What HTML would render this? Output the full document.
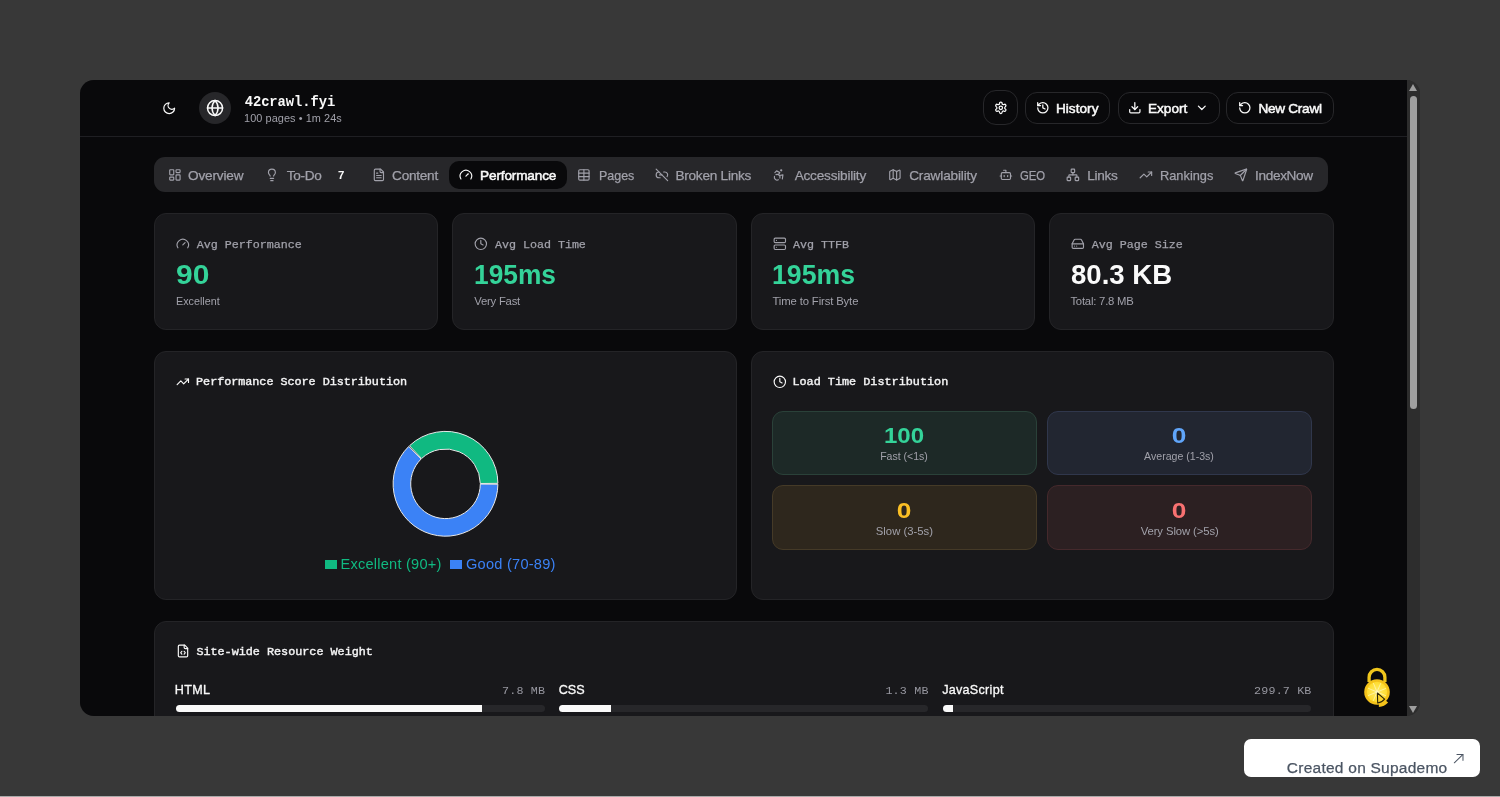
<!DOCTYPE html>
<html lang="en">
<head>
<meta charset="utf-8">
<title>42crawl.fyi – Performance</title>
<style>
*{box-sizing:border-box;margin:0;padding:0}
html,body{width:1500px;height:797px;overflow:hidden}
body{background:#383838;font-family:"Liberation Sans",sans-serif;color:#fafafa;position:relative}
#bottomline{position:absolute;left:0;top:796px;width:1500px;height:1px;background:#aaaaaa}
#wrap{will-change:transform;position:absolute;left:80px;top:80px;width:1340px;height:635.7px;border-radius:14px;overflow:hidden;background:#2d2d2d}
#frame{position:absolute;left:0;top:0;width:1327px;height:636px;background:#09090b;overflow:hidden}
#sb{position:absolute;left:1327px;top:0;width:13px;height:636px;background:#2d2d2d}
#sb .thumb{position:absolute;left:2.6px;top:16px;width:7.8px;height:313px;border-radius:4px;background:#9e9e9e}
#sb .up{position:absolute;left:1.8px;top:4px;width:0;height:0;border-left:4.5px solid transparent;border-right:4.5px solid transparent;border-bottom:7px solid #9e9e9e}
#sb .down{position:absolute;left:1.8px;top:626.1px;width:0;height:0;border-left:4.5px solid transparent;border-right:4.5px solid transparent;border-top:7px solid #9e9e9e}
.t{position:absolute;white-space:nowrap}
.ico{position:absolute;fill:none;stroke:currentColor;stroke-linecap:round;stroke-linejoin:round;overflow:visible}
.b{position:absolute}
#supa{position:absolute;left:1244px;top:739px;width:236px;height:38px;background:#fff;border-radius:7px}
</style>
</head>
<body>
<div id="wrap">
<div id="frame">
<div class="b" style="left:0.00px;top:56.00px;width:1327.00px;height:1.00px;background:#1f1f23"></div>
<div class="b" style="left:119.00px;top:12.40px;width:32.00px;height:32.00px;background:#27272a;border-radius:16px"></div>
<div class="b" style="left:903.20px;top:10.40px;width:34.60px;height:34.80px;border:1px solid #27272a;border-radius:13px;background:#09090b"></div>
<div class="b" style="left:945.20px;top:12.20px;width:84.70px;height:31.40px;border:1px solid #27272a;border-radius:12px;background:#09090b"></div>
<div class="b" style="left:1037.50px;top:12.20px;width:102.10px;height:31.40px;border:1px solid #27272a;border-radius:12px;background:#09090b"></div>
<div class="b" style="left:1146.40px;top:12.20px;width:107.40px;height:31.40px;border:1px solid #27272a;border-radius:12px;background:#09090b"></div>
<div class="b" style="left:74.00px;top:77.00px;width:1174.00px;height:35.00px;background:#27272a;border-radius:11px"></div>
<div class="b" style="left:369.20px;top:81.20px;width:118.00px;height:27.60px;background:#09090b;border-radius:10px"></div>
<div class="b" style="left:74.00px;top:133.00px;width:284.00px;height:117.00px;background:#18181b;border:1px solid #242427;border-radius:12px"></div>
<div class="b" style="left:372.40px;top:133.00px;width:284.20px;height:117.00px;background:#18181b;border:1px solid #242427;border-radius:12px"></div>
<div class="b" style="left:670.60px;top:133.00px;width:284.40px;height:117.00px;background:#18181b;border:1px solid #242427;border-radius:12px"></div>
<div class="b" style="left:969.00px;top:133.00px;width:284.60px;height:117.00px;background:#18181b;border:1px solid #242427;border-radius:12px"></div>
<div class="b" style="left:74.00px;top:270.80px;width:582.60px;height:249.20px;background:#18181b;border:1px solid #242427;border-radius:12px"></div>
<div class="b" style="left:670.60px;top:270.80px;width:583.00px;height:249.20px;background:#18181b;border:1px solid #242427;border-radius:12px"></div>
<svg class="b" style="left:0;top:0" width="1327" height="636"><path d="M417.90 403.34A52.4 52.4 0 0 0 329.50 365.73L341.59 378.52A34.8 34.8 0 0 1 400.30 403.50Z" fill="#10b981" stroke="#e8e8e8" stroke-width="1"/><path d="M328.71 366.49A52.4 52.4 0 1 0 417.90 404.26L400.30 404.10A34.8 34.8 0 1 1 341.07 379.02Z" fill="#3b82f6" stroke="#e8e8e8" stroke-width="1"/></svg>
<div class="b" style="left:245.20px;top:479.80px;width:12.00px;height:9.60px;background:#10b981"></div>
<div class="b" style="left:370.40px;top:479.80px;width:11.80px;height:9.60px;background:#3b82f6"></div>
<div class="b" style="left:691.70px;top:330.90px;width:265.20px;height:64.00px;background:#1d2927;border:1px solid #2a4139;border-radius:11px"></div>
<div class="b" style="left:967.30px;top:330.90px;width:264.90px;height:64.00px;background:#222631;border:1px solid #30374c;border-radius:11px"></div>
<div class="b" style="left:691.70px;top:405.30px;width:265.20px;height:64.60px;background:#2e271d;border:1px solid #453a27;border-radius:11px"></div>
<div class="b" style="left:967.30px;top:405.30px;width:264.90px;height:64.60px;background:#2c2022;border:1px solid #45292c;border-radius:11px"></div>
<div class="b" style="left:74.00px;top:541.00px;width:1179.60px;height:179.00px;background:#18181b;border:1px solid #242427;border-radius:12px"></div>
<div class="b" style="left:95.80px;top:625.00px;width:369.20px;height:7.30px;background:#27272a;border-radius:4px"></div>
<div class="b" style="left:95.80px;top:625.00px;width:305.90px;height:7.30px;background:#fafafa;border-radius:4px 0 0 4px"></div>
<div class="b" style="left:479.30px;top:625.00px;width:368.50px;height:7.30px;background:#27272a;border-radius:4px"></div>
<div class="b" style="left:479.30px;top:625.00px;width:51.40px;height:7.30px;background:#fafafa;border-radius:4px 0 0 4px"></div>
<div class="b" style="left:862.70px;top:625.00px;width:368.30px;height:7.30px;background:#27272a;border-radius:4px"></div>
<div class="b" style="left:862.70px;top:625.00px;width:10.00px;height:7.30px;background:#fafafa;border-radius:4px 0 0 4px"></div>
<svg class="b" style="left:1276.70px;top:582.00px;overflow:visible" width="40" height="50" viewBox="-20 -30 40 50">
<defs><radialGradient id="lg" cx="50%" cy="50%" r="50%"><stop offset="0" stop-color="#fffbe0"/><stop offset="0.22" stop-color="#ffe95e"/><stop offset="1" stop-color="#ffdc2e"/></radialGradient></defs>
<path d="M-7.9 -10V-14.7a7.9 7.9 0 0 1 15.8 0V-10" fill="none" stroke="#f0c61c" stroke-width="3.3"/>
<circle r="12.8" fill="#f4c21a"/>
<circle r="10.2" fill="url(#lg)"/>
<g stroke="#fff6b8" stroke-width="0.9" opacity="0.85"><line x1="0" y1="0" x2="3.75" y2="-8.84"/><line x1="0" y1="0" x2="8.90" y2="-3.60"/><line x1="0" y1="0" x2="8.84" y2="3.75"/><line x1="0" y1="0" x2="3.60" y2="8.90"/><line x1="0" y1="0" x2="-3.75" y2="8.84"/><line x1="0" y1="0" x2="-8.90" y2="3.60"/><line x1="0" y1="0" x2="-8.84" y2="-3.75"/><line x1="0" y1="0" x2="-3.60" y2="-8.90"/></g>
<path d="M0.6 1.2L1 13.6A12.8 12.8 0 0 0 10.2 9.2Z" fill="#f4c21a" transform="translate(0.9 1.3)"/>
<path d="M0.4 1L0.7 11A10.2 10.2 0 0 0 7.6 7.2Z" fill="#fbd42c" stroke="#2b2406" stroke-width="1.1" stroke-linejoin="round"/>
</svg>
<svg class="ico" viewBox="0 0 24 24" width="14.4" height="14.4" style="left:82.10px;top:20.80px;color:#fafafa;stroke-width:2"><path d="M12 3a6 6 0 0 0 9 9 9 9 0 1 1-9-9Z"/></svg>
<svg class="ico" viewBox="0 0 24 24" width="18.1" height="18.1" style="left:125.95px;top:19.05px;color:#fafafa;stroke-width:2"><circle cx="12" cy="12" r="10"/><path d="M12 2a14.5 14.5 0 0 0 0 20 14.5 14.5 0 0 0 0-20"/><path d="M2 12h20"/></svg>
<svg class="ico" viewBox="0 0 24 24" width="13.65" height="13.65" style="left:913.57px;top:21.38px;color:#fafafa;stroke-width:2.2"><path d="M12.22 2h-.44a2 2 0 0 0-2 2v.18a2 2 0 0 1-1 1.73l-.43.25a2 2 0 0 1-2 0l-.15-.08a2 2 0 0 0-2.73.73l-.22.38a2 2 0 0 0 .73 2.73l.15.1a2 2 0 0 1 1 1.72v.51a2 2 0 0 1-1 1.74l-.15.09a2 2 0 0 0-.73 2.73l.22.38a2 2 0 0 0 2.73.73l.15-.08a2 2 0 0 1 2 0l.43.25a2 2 0 0 1 1 1.73V20a2 2 0 0 0 2 2h.44a2 2 0 0 0 2-2v-.18a2 2 0 0 1 1-1.73l.43-.25a2 2 0 0 1 2 0l.15.08a2 2 0 0 0 2.73-.73l.22-.39a2 2 0 0 0-.73-2.73l-.15-.08a2 2 0 0 1-1-1.74v-.5a2 2 0 0 1 1-1.74l.15-.09a2 2 0 0 0 .73-2.73l-.22-.38a2 2 0 0 0-2.73-.73l-.15.08a2 2 0 0 1-2 0l-.43-.25a2 2 0 0 1-1-1.73V4a2 2 0 0 0-2-2z"/><circle cx="12" cy="12" r="3"/></svg>
<svg class="ico" viewBox="0 0 24 24" width="13.65" height="13.65" style="left:956.17px;top:21.08px;color:#fafafa;stroke-width:2.2"><path d="M3 12a9 9 0 1 0 9-9 9.75 9.75 0 0 0-6.74 2.74L3 8"/><path d="M3 3v5h5"/><path d="M12 7v5l4 2"/></svg>
<svg class="ico" viewBox="0 0 24 24" width="13.65" height="13.65" style="left:1048.17px;top:21.08px;color:#fafafa;stroke-width:2.2"><path d="M21 15v4a2 2 0 0 1-2 2H5a2 2 0 0 1-2-2v-4"/><path d="m7 10 5 5 5-5"/><path d="M12 15V3"/></svg>
<svg class="ico" viewBox="0 0 24 24" width="13.65" height="13.65" style="left:1114.97px;top:21.08px;color:#fafafa;stroke-width:2.2"><path d="m6 9 6 6 6-6"/></svg>
<svg class="ico" viewBox="0 0 24 24" width="13.65" height="13.65" style="left:1157.97px;top:21.08px;color:#fafafa;stroke-width:2.2"><path d="M3 12a9 9 0 1 0 9-9 9.75 9.75 0 0 0-6.74 2.74L3 8"/><path d="M3 3v5h5"/></svg>
<svg class="ico" viewBox="0 0 24 24" width="13.8" height="13.8" style="left:88.00px;top:88.10px;color:#a1a1aa;stroke-width:2"><rect width="7" height="9" x="3" y="3" rx="1"/><rect width="7" height="5" x="14" y="3" rx="1"/><rect width="7" height="9" x="14" y="12" rx="1"/><rect width="7" height="5" x="3" y="16" rx="1"/></svg>
<svg class="ico" viewBox="0 0 24 24" width="13.8" height="13.8" style="left:185.20px;top:88.10px;color:#a1a1aa;stroke-width:2"><path d="M15 14c.2-1 .7-1.7 1.5-2.5 1-.9 1.500-2.200 1.500-3.500A6 6 0 0 0 6 8c0 1 .2 2.200 1.500 3.500.7.700 1.300 1.500 1.500 2.500"/><path d="M9 18h6"/><path d="M10 22h4"/></svg>
<svg class="ico" viewBox="0 0 24 24" width="13.8" height="13.8" style="left:291.80px;top:88.10px;color:#a1a1aa;stroke-width:2"><path d="M15 2H6a2 2 0 0 0-2 2v16a2 2 0 0 0 2 2h12a2 2 0 0 0 2-2V7Z"/><path d="M14 2v4a2 2 0 0 0 2 2h4"/><path d="M10 9H8"/><path d="M16 13H8"/><path d="M16 17H8"/></svg>
<svg class="ico" viewBox="0 0 24 24" width="13.8" height="13.8" style="left:379.10px;top:88.10px;color:#fafafa;stroke-width:2"><path d="m12 14 4-4"/><path d="M3.340 19a10 10 0 1 1 17.320 0"/></svg>
<svg class="ico" viewBox="0 0 24 24" width="13.8" height="13.8" style="left:497.10px;top:88.10px;color:#a1a1aa;stroke-width:2"><path d="M12 3v18"/><rect width="18" height="18" x="3" y="3" rx="2"/><path d="M3 9h18"/><path d="M3 15h18"/></svg>
<svg class="ico" viewBox="0 0 24 24" width="13.8" height="13.8" style="left:574.90px;top:88.10px;color:#a1a1aa;stroke-width:2"><path d="M9 17H7A5 5 0 0 1 7 7"/><path d="M15 7h2a5 5 0 0 1 4 8"/><path d="M8 12h4"/><path d="M2 2l20 20"/></svg>
<svg class="ico" viewBox="0 0 24 24" width="13.8" height="13.8" style="left:692.30px;top:88.10px;color:#a1a1aa;stroke-width:2"><circle cx="16" cy="4" r="1"/><path d="m18 19 1-7-6 1"/><path d="m5 8 3-3 5.500 3-2.360 3.500"/><path d="M4.240 14.500a5 5 0 0 0 6.880 6"/><path d="M13.760 17.500a5 5 0 0 0-6.880-6"/></svg>
<svg class="ico" viewBox="0 0 24 24" width="13.8" height="13.8" style="left:807.70px;top:88.10px;color:#a1a1aa;stroke-width:2"><path d="M14.106 5.553a2 2 0 0 0 1.788 0l3.659-1.830A1 1 0 0 1 21 4.619v12.764a1 1 0 0 1-.553.894l-4.553 2.277a2 2 0 0 1-1.788 0l-4.212-2.106a2 2 0 0 0-1.788 0l-3.659 1.830A1 1 0 0 1 3 19.381V6.618a1 1 0 0 1 .553-.894l4.553-2.277a2 2 0 0 1 1.788 0z"/><path d="M15 5.764v15"/><path d="M9 3.236v15"/></svg>
<svg class="ico" viewBox="0 0 24 24" width="13.8" height="13.8" style="left:919.40px;top:88.10px;color:#a1a1aa;stroke-width:2"><path d="M12 8V4H8"/><rect width="16" height="12" x="4" y="8" rx="2"/><path d="M2 14h2"/><path d="M20 14h2"/><path d="M15 13v2"/><path d="M9 13v2"/></svg>
<svg class="ico" viewBox="0 0 24 24" width="13.8" height="13.8" style="left:986.40px;top:88.10px;color:#a1a1aa;stroke-width:2"><rect x="16" y="16" width="6" height="6" rx="1"/><rect x="2" y="16" width="6" height="6" rx="1"/><rect x="9" y="2" width="6" height="6" rx="1"/><path d="M5 16v-3a1 1 0 0 1 1-1h12a1 1 0 0 1 1 1v3"/><path d="M12 12V8"/></svg>
<svg class="ico" viewBox="0 0 24 24" width="13.8" height="13.8" style="left:1059.20px;top:88.10px;color:#a1a1aa;stroke-width:2"><path d="M22 7l-8.500 8.500-5-5L2 17"/><path d="M16 7h6v6"/></svg>
<svg class="ico" viewBox="0 0 24 24" width="13.8" height="13.8" style="left:1154.40px;top:88.10px;color:#a1a1aa;stroke-width:2"><path d="M14.536 21.686a.5.5 0 0 0 .937-.024l6.500-19a.496.496 0 0 0-.635-.635l-19 6.500a.5.5 0 0 0-.024.937l7.930 3.180a2 2 0 0 1 1.112 1.110z"/><path d="m21.854 2.147-10.940 10.939"/></svg>
<svg class="ico" viewBox="0 0 24 24" width="13.65" height="13.65" style="left:96.08px;top:157.28px;color:#a1a1aa;stroke-width:2"><path d="m12 14 4-4"/><path d="M3.340 19a10 10 0 1 1 17.320 0"/></svg>
<svg class="ico" viewBox="0 0 24 24" width="13.65" height="13.65" style="left:394.48px;top:157.28px;color:#a1a1aa;stroke-width:2"><circle cx="12" cy="12" r="10"/><path d="M12 6v6l4 2"/></svg>
<svg class="ico" viewBox="0 0 24 24" width="13.65" height="13.65" style="left:692.67px;top:157.28px;color:#a1a1aa;stroke-width:2"><rect width="20" height="8" x="2" y="2" rx="2" ry="2"/><rect width="20" height="8" x="2" y="14" rx="2" ry="2"/><path d="M6 6h.01"/><path d="M6 18h.01"/></svg>
<svg class="ico" viewBox="0 0 24 24" width="13.65" height="13.65" style="left:991.07px;top:157.28px;color:#a1a1aa;stroke-width:2"><path d="M22 12H2"/><path d="M5.450 5.110 2 12v6a2 2 0 0 0 2 2h16a2 2 0 0 0 2-2v-6l-3.450-6.890A2 2 0 0 0 16.760 4H7.240a2 2 0 0 0-1.790 1.110z"/><path d="M6 16h.01"/><path d="M10 16h.01"/></svg>
<svg class="ico" viewBox="0 0 24 24" width="13.65" height="13.65" style="left:95.58px;top:295.07px;color:#fafafa;stroke-width:2"><path d="M22 7l-8.500 8.500-5-5L2 17"/><path d="M16 7h6v6"/></svg>
<svg class="ico" viewBox="0 0 24 24" width="13.65" height="13.65" style="left:692.97px;top:295.18px;color:#fafafa;stroke-width:2"><circle cx="12" cy="12" r="10"/><path d="M12 6v6l4 2"/></svg>
<svg class="ico" viewBox="0 0 24 24" width="14" height="14" style="left:95.70px;top:564.40px;color:#fafafa;stroke-width:2"><path d="M10 12.500 8 15l2 2.500"/><path d="m14 12.500 2 2.500-2 2.500"/><path d="M14 2v4a2 2 0 0 0 2 2h4"/><path d="M15 2H6a2 2 0 0 0-2 2v16a2 2 0 0 0 2 2h12a2 2 0 0 0 2-2V7z"/></svg>
<div class="t" style="top:14.12px;font:bold 13.8px/18px 'Liberation Mono',monospace;color:#fafafa;letter-spacing:-0.040px;left:164.67px;"><span>42crawl.fyi</span></div>
<div class="t" style="top:31.22px;font:normal 10.9px/14px 'Liberation Sans',sans-serif;color:#a1a1aa;letter-spacing:0.076px;left:164.05px;"><span>100 pages • 1m 24s</span></div>
<div class="t" style="top:19.90px;font:normal 13.6px/18px 'Liberation Sans',sans-serif;color:#fafafa;letter-spacing:0.033px;left:975.98px;-webkit-text-stroke:0.5px #fafafa;"><span>History</span></div>
<div class="t" style="top:19.90px;font:normal 13.6px/18px 'Liberation Sans',sans-serif;color:#fafafa;left:1067.98px;-webkit-text-stroke:0.5px #fafafa;"><span>Export</span></div>
<div class="t" style="top:19.90px;font:normal 13.6px/18px 'Liberation Sans',sans-serif;color:#fafafa;letter-spacing:-0.263px;left:1178.38px;-webkit-text-stroke:0.5px #fafafa;"><span>New Crawl</span></div>
<div class="t" style="top:86.81px;font:normal 13.6px/18px 'Liberation Sans',sans-serif;color:#a1a1aa;letter-spacing:-0.157px;left:107.98px;-webkit-text-stroke:0.25px #a1a1aa;"><span>Overview</span></div>
<div class="t" style="top:86.81px;font:normal 13.6px/18px 'Liberation Sans',sans-serif;color:#a1a1aa;letter-spacing:-0.275px;left:206.78px;-webkit-text-stroke:0.25px #a1a1aa;"><span>To-Do</span></div>
<div class="t" style="top:86.81px;font:normal 13.6px/18px 'Liberation Sans',sans-serif;color:#a1a1aa;letter-spacing:-0.250px;left:312.08px;-webkit-text-stroke:0.25px #a1a1aa;"><span>Content</span></div>
<div class="t" style="top:86.81px;font:normal 13.6px/18px 'Liberation Sans',sans-serif;color:#fafafa;letter-spacing:-0.150px;left:400.08px;-webkit-text-stroke:0.5px #fafafa;"><span>Performance</span></div>
<div class="t" style="top:86.81px;font:normal 13.6px/18px 'Liberation Sans',sans-serif;color:#a1a1aa;left:518.55px;transform:scaleX(0.9171);transform-origin:0 50%;-webkit-text-stroke:0.25px #a1a1aa;"><span>Pages</span></div>
<div class="t" style="top:86.81px;font:normal 13.6px/18px 'Liberation Sans',sans-serif;color:#a1a1aa;letter-spacing:-0.236px;left:595.38px;-webkit-text-stroke:0.25px #a1a1aa;"><span>Broken Links</span></div>
<div class="t" style="top:86.81px;font:normal 13.6px/18px 'Liberation Sans',sans-serif;color:#a1a1aa;letter-spacing:-0.208px;left:714.68px;-webkit-text-stroke:0.25px #a1a1aa;"><span>Accessibility</span></div>
<div class="t" style="top:86.81px;font:normal 13.6px/18px 'Liberation Sans',sans-serif;color:#a1a1aa;letter-spacing:-0.155px;left:829.18px;-webkit-text-stroke:0.25px #a1a1aa;"><span>Crawlability</span></div>
<div class="t" style="top:86.81px;font:normal 13.6px/18px 'Liberation Sans',sans-serif;color:#a1a1aa;left:940.22px;transform:scaleX(0.8333);transform-origin:0 50%;-webkit-text-stroke:0.25px #a1a1aa;"><span>GEO</span></div>
<div class="t" style="top:86.81px;font:normal 13.6px/18px 'Liberation Sans',sans-serif;color:#a1a1aa;letter-spacing:-0.300px;left:1007.28px;-webkit-text-stroke:0.25px #a1a1aa;"><span>Links</span></div>
<div class="t" style="top:86.81px;font:normal 13.6px/18px 'Liberation Sans',sans-serif;color:#a1a1aa;left:1079.73px;transform:scaleX(0.9422);transform-origin:0 50%;-webkit-text-stroke:0.25px #a1a1aa;"><span>Rankings</span></div>
<div class="t" style="top:86.81px;font:normal 13.6px/18px 'Liberation Sans',sans-serif;color:#a1a1aa;letter-spacing:-0.343px;left:1175.08px;-webkit-text-stroke:0.25px #a1a1aa;"><span>IndexNow</span></div>
<div class="t" style="top:87.80px;font:bold 11px/14px 'Liberation Sans',sans-serif;color:#fafafa;left:258.12px;transform:scaleX(1.0370);transform-origin:0 50%;"><span>7</span></div>
<div class="t" style="top:157.61px;font:normal 11.7px/15px 'Liberation Mono',monospace;color:#a1a1aa;letter-spacing:-0.021px;left:116.80px;-webkit-text-stroke:0.25px #a1a1aa;"><span>Avg Performance</span></div>
<div class="t" style="top:178.40px;font:bold 26.8px/35px 'Liberation Sans',sans-serif;color:#34d399;left:96.40px;transform:scaleX(1.1197);transform-origin:0 50%;"><span>90</span></div>
<div class="t" style="top:214.01px;font:normal 11.3px/15px 'Liberation Sans',sans-serif;color:#a1a1aa;left:95.85px;transform:scaleX(0.9537);transform-origin:0 50%;"><span>Excellent</span></div>
<div class="t" style="top:157.61px;font:normal 11.7px/15px 'Liberation Mono',monospace;color:#a1a1aa;letter-spacing:-0.025px;left:415.00px;-webkit-text-stroke:0.25px #a1a1aa;"><span>Avg Load Time</span></div>
<div class="t" style="top:178.40px;font:bold 26.8px/35px 'Liberation Sans',sans-serif;color:#34d399;left:393.95px;transform:scaleX(0.9828);transform-origin:0 50%;"><span>195ms</span></div>
<div class="t" style="top:214.01px;font:normal 11.3px/15px 'Liberation Sans',sans-serif;color:#a1a1aa;letter-spacing:-0.225px;left:394.32px;"><span>Very Fast</span></div>
<div class="t" style="top:157.61px;font:normal 11.7px/15px 'Liberation Mono',monospace;color:#a1a1aa;letter-spacing:-0.043px;left:713.10px;-webkit-text-stroke:0.25px #a1a1aa;"><span>Avg TTFB</span></div>
<div class="t" style="top:178.40px;font:bold 26.8px/35px 'Liberation Sans',sans-serif;color:#34d399;left:691.53px;transform:scaleX(0.9950);transform-origin:0 50%;"><span>195ms</span></div>
<div class="t" style="top:214.01px;font:normal 11.3px/15px 'Liberation Sans',sans-serif;color:#a1a1aa;letter-spacing:-0.129px;left:692.52px;"><span>Time to First Byte</span></div>
<div class="t" style="top:157.61px;font:normal 11.7px/15px 'Liberation Mono',monospace;color:#a1a1aa;letter-spacing:-0.025px;left:1011.80px;-webkit-text-stroke:0.25px #a1a1aa;"><span>Avg Page Size</span></div>
<div class="t" style="top:178.40px;font:bold 26.8px/35px 'Liberation Sans',sans-serif;color:#fafafa;left:990.90px;transform:scaleX(1.0290);transform-origin:0 50%;"><span>80.3 KB</span></div>
<div class="t" style="top:214.01px;font:normal 11.3px/15px 'Liberation Sans',sans-serif;color:#a1a1aa;letter-spacing:-0.208px;left:990.42px;"><span>Total: 7.8 MB</span></div>
<div class="t" style="top:295.00px;font:normal 11.8px/15px 'Liberation Mono',monospace;color:#f4f4f5;letter-spacing:-0.048px;left:116.09px;-webkit-text-stroke:0.4px #f4f4f5;"><span>Performance Score Distribution</span></div>
<div class="t" style="top:295.00px;font:normal 11.8px/15px 'Liberation Mono',monospace;color:#f4f4f5;letter-spacing:0.005px;left:712.39px;-webkit-text-stroke:0.4px #f4f4f5;"><span>Load Time Distribution</span></div>
<div class="t" style="top:474.81px;font:normal 14.6px/19px 'Liberation Sans',sans-serif;color:#10b981;letter-spacing:0.221px;left:260.52px;"><span>Excellent (90+)</span></div>
<div class="t" style="top:474.81px;font:normal 14.6px/19px 'Liberation Sans',sans-serif;color:#3b82f6;letter-spacing:0.236px;left:386.02px;"><span>Good (70-89)</span></div>
<div class="t" style="top:342.10px;font:bold 21.2px/28px 'Liberation Sans',sans-serif;color:#34d399;left:673.90px;width:300px;text-align:center;transform:scaleX(1.1358);transform-origin:50% 50%;"><span>100</span></div>
<div class="t" style="top:369.31px;font:normal 11.3px/15px 'Liberation Sans',sans-serif;color:#a1a1aa;left:673.90px;width:300px;text-align:center;transform:scaleX(0.9312);transform-origin:50% 50%;"><span>Fast (&lt;1s)</span></div>
<div class="t" style="top:342.10px;font:bold 21.2px/28px 'Liberation Sans',sans-serif;color:#60a5fa;left:949.25px;width:300px;text-align:center;transform:scaleX(1.2404);transform-origin:50% 50%;"><span>0</span></div>
<div class="t" style="top:369.31px;font:normal 11.3px/15px 'Liberation Sans',sans-serif;color:#a1a1aa;left:949.25px;width:300px;text-align:center;transform:scaleX(0.9368);transform-origin:50% 50%;"><span>Average (1-3s)</span></div>
<div class="t" style="top:416.51px;font:bold 21.2px/28px 'Liberation Sans',sans-serif;color:#fbbf24;left:673.90px;width:300px;text-align:center;transform:scaleX(1.2404);transform-origin:50% 50%;"><span>0</span></div>
<div class="t" style="top:443.72px;font:normal 11.3px/15px 'Liberation Sans',sans-serif;color:#a1a1aa;letter-spacing:0.010px;left:674.41px;width:300px;text-align:center;"><span>Slow (3-5s)</span></div>
<div class="t" style="top:416.51px;font:bold 21.2px/28px 'Liberation Sans',sans-serif;color:#f87171;left:949.25px;width:300px;text-align:center;transform:scaleX(1.2404);transform-origin:50% 50%;"><span>0</span></div>
<div class="t" style="top:443.72px;font:normal 11.3px/15px 'Liberation Sans',sans-serif;color:#a1a1aa;letter-spacing:-0.100px;left:949.70px;width:300px;text-align:center;"><span>Very Slow (&gt;5s)</span></div>
<div class="t" style="top:565.00px;font:normal 11.8px/15px 'Liberation Mono',monospace;color:#f4f4f5;letter-spacing:-0.017px;left:116.39px;-webkit-text-stroke:0.4px #f4f4f5;"><span>Site-wide Resource Weight</span></div>
<div class="t" style="top:601.92px;font:normal 12.6px/16px 'Liberation Sans',sans-serif;color:#fafafa;letter-spacing:0.300px;left:94.84px;-webkit-text-stroke:0.3px #fafafa;"><span>HTML</span></div>
<div class="t" style="top:604.01px;font:normal 11.7px/15px 'Liberation Mono',monospace;color:#96969f;letter-spacing:0.200px;left:65.30px;width:400px;text-align:right;"><span>7.8 MB</span></div>
<div class="t" style="top:601.92px;font:normal 12.6px/16px 'Liberation Sans',sans-serif;color:#fafafa;letter-spacing:-0.050px;left:478.84px;-webkit-text-stroke:0.3px #fafafa;"><span>CSS</span></div>
<div class="t" style="top:604.01px;font:normal 11.7px/15px 'Liberation Mono',monospace;color:#96969f;letter-spacing:0.200px;left:448.70px;width:400px;text-align:right;"><span>1.3 MB</span></div>
<div class="t" style="top:601.92px;font:normal 12.6px/16px 'Liberation Sans',sans-serif;color:#fafafa;letter-spacing:0.278px;left:862.14px;-webkit-text-stroke:0.3px #fafafa;"><span>JavaScript</span></div>
<div class="t" style="top:604.01px;font:normal 11.7px/15px 'Liberation Mono',monospace;color:#96969f;letter-spacing:0.171px;left:831.57px;width:400px;text-align:right;"><span>299.7 KB</span></div>
</div>
<div id="sb"><div class="up"></div><div class="thumb"></div><div class="down"></div></div>
</div>
<div id="supa"><svg style="position:absolute;left:210.3px;top:14.6px;overflow:visible" width="9.8" height="9.8" viewBox="0 0 12 12" fill="none" stroke="#4b5563" stroke-width="1.25" stroke-linecap="round" stroke-linejoin="round"><path d="M0.4 10.8 11 0.6"/><path d="M3.6 0.6H11V7.8"/></svg></div>
<div style="will-change:transform;position:absolute;left:0;top:0;width:1500px;height:797px">
<div class="t" style="top:758.20px;font:normal 15.5px/20px 'Liberation Sans',sans-serif;color:#4b5563;letter-spacing:0.244px;left:1286.87px;-webkit-text-stroke:0.25px #4b5563;"><span>Created on Supademo</span></div>
</div>
<div id="bottomline"></div>
</body>
</html>
